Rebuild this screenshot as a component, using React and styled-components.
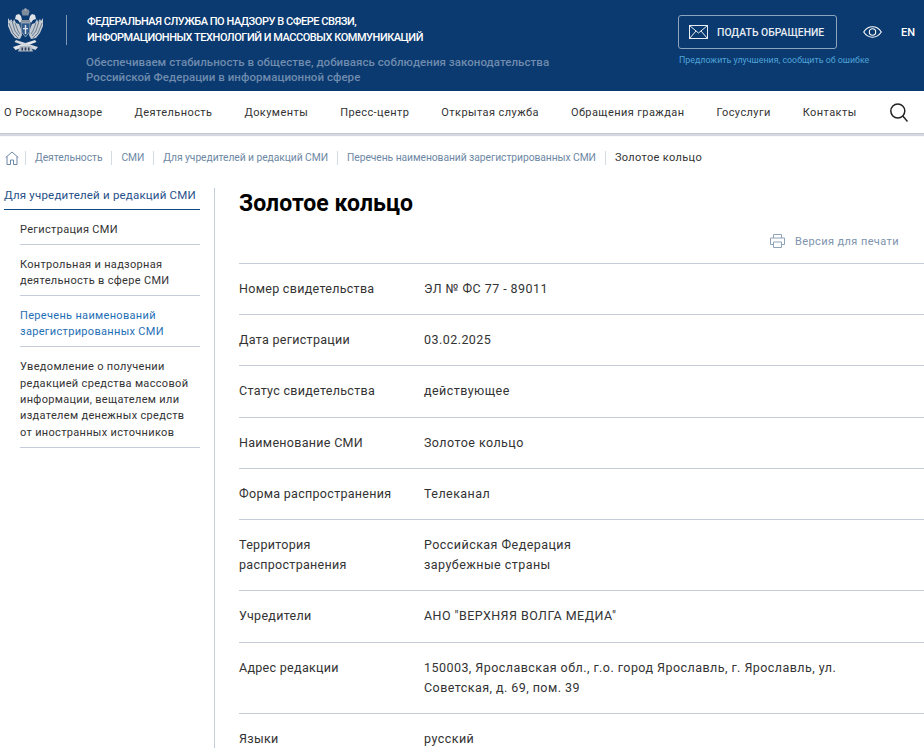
import React from 'react';
import styled, { createGlobalStyle } from 'styled-components';

const Global = createGlobalStyle`
  html, body { margin: 0; padding: 0; background: #fff; }
  body { font-family: Roboto, "Liberation Sans", sans-serif; overflow: hidden; }
  * { box-sizing: border-box; }
`;
const Page = styled.div`width: 924px; height: 748px; overflow: hidden;`;
const Header = styled.header`
  height: 91px; background: #0a3a70; display: flex; position: relative; padding: 0 0 0 6px;
`;
const LogoBox = styled.div`width: 39px; margin-top: 8px; height: 44px;`;
const Divider = styled.div`width: 1px; height: 30px; background: #7f95b2; margin: 15px 20px 0 21px;`;
const Titles = styled.div`width: 591px; padding-top: 14px;`;
const Org = styled.div`
  color: #fff; font-size: 11px; font-weight: 500; line-height: 16px; letter-spacing: -0.47px; text-transform: uppercase;
`;
const Motto = styled.div`
  color: #6f8bad; font-size: 11.5px; font-weight: 500; line-height: 15.5px; margin: 8.5px 0 0 -1px; letter-spacing: 0.05px;
`;
const Actions = styled.div`width: 160px; padding-top: 15px;`;
const Appeal = styled.div`
  width: 159px; height: 34px; border: 1px solid #8ea3bd; border-radius: 3px; display: flex; align-items: center;
  padding-left: 10px; gap: 9px; color: #e8edf3; font-size: 10.4px; font-weight: 500; white-space: nowrap;
`;
const Suggest = styled.div`color: #4fa3d8; font-size: 8.85px; margin: 6px 0 0 1px; white-space: nowrap;`;
const Tools = styled.div`display: flex; align-items: center; height: 34px; margin-top: 15px; margin-left: 25px; gap: 18px;`;
const En = styled.span`color: #fff; font-size: 11px; font-weight: 500; margin-left: 1px;`;

const Nav = styled.nav`
  height: 43px; display: flex; align-items: center; justify-content: space-between; padding: 0 16px 0 4px; background: #fff;
  border-bottom: 1px solid #c4cad3; box-shadow: 0 2px 1px #d5d9df;
`;
const NavLink = styled.a`font-size: 11px; color: #333; letter-spacing: 0.42px; white-space: nowrap;`;
const NavLinks = styled.div`display: flex; gap: 32px; align-items: center;`;

const Crumbs = styled.div`display: flex; align-items: center; height: 14px; margin: 17px 0 0 5px;`;
const Crumb = styled.span`
  font-size: ${p => (p.$last ? 11 : 10.3)}px; letter-spacing: ${p => (p.$last ? 0.35 : -0.06)}px;
  color: ${p => (p.$last ? '#333' : '#6d87a4')}; white-space: nowrap; padding: 0 9px 0 9px;
  line-height: 14px; border-left: 1px solid #d5dbe2;
`;
const Body = styled.div`display: flex; margin-top: 23px; padding-left: 4px;`;
const Side = styled.aside`width: 196px; margin-right: 14px; flex: none;`;
const SideHead = styled.div`
  font-size: 11.5px; color: #27508a; padding: 0 0 7px; border-bottom: 1px solid #0f4b83; line-height: 14px; white-space: nowrap; letter-spacing: 0.2px;
`;
const SideItem = styled.div`
  margin-left: 16px; padding: 12px 0 5.4px; border-bottom: 1px solid #c5ced8; font-size: 11px; line-height: 16.4px;
  letter-spacing: 0.32px; color: ${p => (p.$active ? '#1f6fb5' : '#333')};
`;
const Main = styled.main`flex: 1; border-left: 1px solid #c5ced8; padding-left: 24px; height: 600px;`;
const Title = styled.h1`font-size: 23px; font-weight: 700; color: #000; margin: 0; line-height: 32px; letter-spacing: 0.05px;`;
const PrintRow = styled.div`
  display: flex; justify-content: flex-end; align-items: center; gap: 10px; height: 16px; margin: 13px 25px 14px 0;
  color: #7d93ac; font-size: 11px; letter-spacing: 0.4px;
`;
const Rows = styled.div`border-top: 1px solid #c5ced8;`;
const Row = styled.div`
  display: flex; height: ${p => p.$h}px; border-bottom: 1px solid #c5ced8; padding-top: 15px;
  font-size: 12.5px; line-height: 20px; color: #333;
`;
const Label = styled.div`width: 185px; flex: none; letter-spacing: 0.3px;`;
const Value = styled.div`flex: 1; letter-spacing: 0.45px;`;

const Emblem = () => (
  <svg width="39" height="44" viewBox="0 0 39 44">
    <path d="M2 10l2 3 1-2 2 3 1-3 2 4 3 1 2 5 1 6-2 4-5-1-4-5-3-7z" fill="#c3cad2" />
    <path d="M37 10l-2 3-1-2-2 3-1-3-2 4-3 1-2 5-1 6 2 4 5-1 4-5 3-7z" fill="#c3cad2" />
    <path d="M3 15l4 10 5 5M6 13l3 10 4 5M9 15l3 8 2 3M36 15l-4 10-5 5M33 13l-3 10-4 5M30 15l-3 8-2 3" stroke="#52677f" strokeWidth=".8" fill="none" />
    <path d="M16.500 1.500h6l1 2-1 4h-6l-1-4z" fill="#7f8c9b" />
    <circle cx="19.500" cy="1.500" r="1.200" fill="#aab3bd" />
    <path d="M10 7l3-1 2 2 1 4-2 3-2-3-3-1zM29 7l-3-1-2 2-1 4 2 3 2-3 3-1z" fill="#dfe3e8" />
    <path d="M15 12h9v3h-9z" fill="#8a96a4" />
    <path d="M15 15h9l-.5 9-4 5-4-5z" fill="#2f5a8c" stroke="#aab4c0" strokeWidth=".7" />
    <path d="M18.800 17h1.400v9h-1.400zM17 20h5v1.200h-5z" fill="#dfe3e8" />
    <path d="M7 39l22-7 1.500 2-21 8z" fill="#e4e7eb" />
    <path d="M32 39l-22-7-1.500 2 21 8z" fill="#d3d8de" />
    <path d="M14 38h11l2 5.500H12z" fill="#aeb7c2" />
    <path d="M15.500 39.500h1.500v3h-1.500zM18.700 39.500h1.600v3h-1.600zM22 39.500h1.500v3H22z" fill="#2a3f5c" />
  </svg>
);

const rows = [
  [51, 'Номер свидетельства', 'ЭЛ № ФС 77 - 89011'],
  [51, 'Дата регистрации', '03.02.2025'],
  [52, 'Статус свидетельства', 'действующее'],
  [51, 'Наименование СМИ', 'Золотое кольцо'],
  [51, 'Форма распространения', 'Телеканал'],
  [71, <>Территория<br />распространения</>, <>Российская Федерация<br />зарубежные страны</>],
  [52, 'Учредители', 'АНО "ВЕРХНЯЯ ВОЛГА МЕДИА"'],
  [71, 'Адрес редакции', <>150003, Ярославская обл., г.о. город Ярославль, г. Ярославль, ул.<br />Советская, д. 69, пом. 39</>],
  [51, 'Языки', 'русский'],
];
const nav = ['О Роскомнадзоре', 'Деятельность', 'Документы', 'Пресс-центр', 'Открытая служба', 'Обращения граждан', 'Госуслуги', 'Контакты'];
const crumbs = ['Деятельность', 'СМИ', 'Для учредителей и редакций СМИ', 'Перечень наименований зарегистрированных СМИ', 'Золотое кольцо'];

export default function App() {
  return (
    <Page>
      <Global />
      <Header>
        <LogoBox><Emblem /></LogoBox>
        <Divider />
        <Titles>
          <Org>Федеральная служба по надзору в сфере связи,<br />информационных технологий и массовых коммуникаций</Org>
          <Motto>Обеспечиваем стабильность в обществе, добиваясь соблюдения законодательства<br />Российской Федерации в информационной сфере</Motto>
        </Titles>
        <Actions>
          <Appeal>
            <svg width="19" height="14" viewBox="0 0 19 14" fill="none" stroke="#e8edf3" strokeWidth="1">
              <rect x="0.500" y="0.500" width="18" height="13" />
              <path d="M.5.5l9 7.500 9-7.500M.5 13.500l6.500-7.500M18.500 13.500L12 6" />
            </svg>
            ПОДАТЬ ОБРАЩЕНИЕ
          </Appeal>
          <Suggest>Предложить улучшения, сообщить об ошибке</Suggest>
        </Actions>
        <Tools>
          <svg width="19" height="12" viewBox="0 0 19 12" fill="none" stroke="#fff" strokeWidth="1.100">
            <path d="M.7 6C3 2.500 6 .8 9.500.8S16 2.500 18.300 6C16 9.500 13 11.200 9.500 11.200S3 9.500.7 6z" />
            <circle cx="9.500" cy="6" r="3.200" />
          </svg>
          <En>EN</En>
        </Tools>
      </Header>
      <Nav>
        <NavLinks>{nav.map(n => <NavLink key={n}>{n}</NavLink>)}</NavLinks>
        <svg width="18" height="19" viewBox="0 0 18 19" fill="none" stroke="#222" strokeWidth="1.500">
          <circle cx="7.800" cy="8" r="7" />
          <path d="M12.800 13l4.700 5.500" />
        </svg>
      </Nav>
      <Crumbs>
        <svg width="14" height="14" viewBox="0 0 14 14" fill="none" stroke="#6d87a4" strokeWidth="1" style={{ marginRight: 6 }}>
          <path d="M.7 6.500L7 1l6.300 5.500M2 5.500v8h3.500V9h3v4.500H12v-8" />
        </svg>
        {crumbs.map((c, i) => <Crumb key={c} $last={i === crumbs.length - 1}>{c}</Crumb>)}
      </Crumbs>
      <Body>
        <Side>
          <SideHead>Для учредителей и редакций СМИ</SideHead>
          <SideItem>Регистрация СМИ</SideItem>
          <SideItem>Контрольная и надзорная деятельность в сфере СМИ</SideItem>
          <SideItem $active>Перечень наименований зарегистрированных СМИ</SideItem>
          <SideItem>Уведомление о получении редакцией средства массовой информации, вещателем или издателем денежных средств<br />от иностранных источников</SideItem>
        </Side>
        <Main>
          <Title>Золотое кольцо</Title>
          <PrintRow>
            <svg width="15" height="14" viewBox="0 0 15 14" fill="none" stroke="#8fa2b8" strokeWidth="1">
              <path d="M3.500 4V.5h8V4M3.500 10.500H.5V4h14v6.500h-3M3.500 8h8v5.500h-8z" />
            </svg>
            Версия для печати
          </PrintRow>
          <Rows>
            {rows.map((r, i) => (
              <Row key={i} $h={r[0]}>
                <Label>{r[1]}</Label>
                <Value>{r[2]}</Value>
              </Row>
            ))}
          </Rows>
        </Main>
      </Body>
    </Page>
  );
}
